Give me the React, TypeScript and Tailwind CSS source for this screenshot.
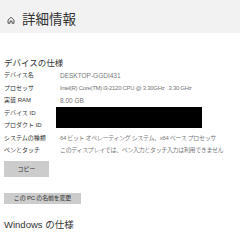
import React from "react";

const jp = { fontFamily: '"Liberation Sans", "Noto Sans CJK JP", sans-serif' };

const rows: [string, string | null, string][] = [
  ["デバイス名", "DESKTOP-GGDI431", "text-[6.5px] tracking-[0px]"],
  ["プロセッサ", "Intel(R) Core(TM) i3-2120 CPU @ 3.30GHz   3.30 GHz", "text-[6px] tracking-[-0.3px]"],
  ["実装 RAM", "8.00 GB", "text-[6.5px] tracking-[0px]"],
  ["デバイス ID", null, ""],
  ["プロダクト ID", null, ""],
  ["システムの種類", "64 ビット オペレーティング システム、x64 ベース プロセッサ", "text-[6px] tracking-[-0.35px]"],
  ["ペンとタッチ", "このディスプレイでは、ペン入力とタッチ入力は利用できません", "text-[6px] tracking-[-0.35px]"],
];

export default function App() {
  return (
    <div className="w-[240px] h-[240px] bg-white overflow-hidden" style={jp}>
      <div className="h-[33px] bg-[#f2f2f3] flex items-center pl-[7px] pt-[6px]">
        <svg width="8" height="8" viewBox="0 0 16 16" fill="none" stroke="#333" strokeWidth="1.6" strokeLinejoin="round">
          <path d="M2 8 L8 2.5 L14 8 V14.5 H10 V10 H6 V14.5 H2 Z" />
        </svg>
        <span className="ml-[7px] text-[13.5px] leading-none text-[#333]">詳細情報</span>
      </div>
      <div className="pl-[4px] pt-[24px]">
        <div className="text-[8.5px] leading-[12px] text-[#333]">デバイスの仕様</div>
        <div className="grid grid-cols-[52px_1fr] mt-[0.5px]">
          {rows.map(([label, value, cls], i) => (
            <React.Fragment key={i}>
              <div className="h-[12.5px] flex items-center text-[6px] text-[#333] whitespace-nowrap">{label}</div>
              {i === 3 ? (
                <div className="row-span-2 relative">
                  <div className="absolute left-0 top-[-0.5px] w-[146px] h-[21px] bg-black" />
                </div>
              ) : i === 4 ? null : (
                <div className={`h-[12.5px] flex items-center pl-[4px] text-[#777] whitespace-pre ${cls}`}>{value}</div>
              )}
            </React.Fragment>
          ))}
        </div>
        <button className="mt-[4px] w-[45px] h-[16px] bg-[#cccccc] text-[6px] text-[#333] flex items-center justify-center">
          コピー
        </button>
        <button className="mt-[16px] w-[77px] h-[11px] bg-[#cccccc] text-[6px] tracking-[-0.2px] text-[#333] flex items-center justify-center whitespace-nowrap">
          この PC の名前を変更
        </button>
        <div className="mt-[15px] text-[9.5px] leading-[12px] text-[#333] whitespace-nowrap">Windows の仕様</div>
      </div>
    </div>
  );
}
